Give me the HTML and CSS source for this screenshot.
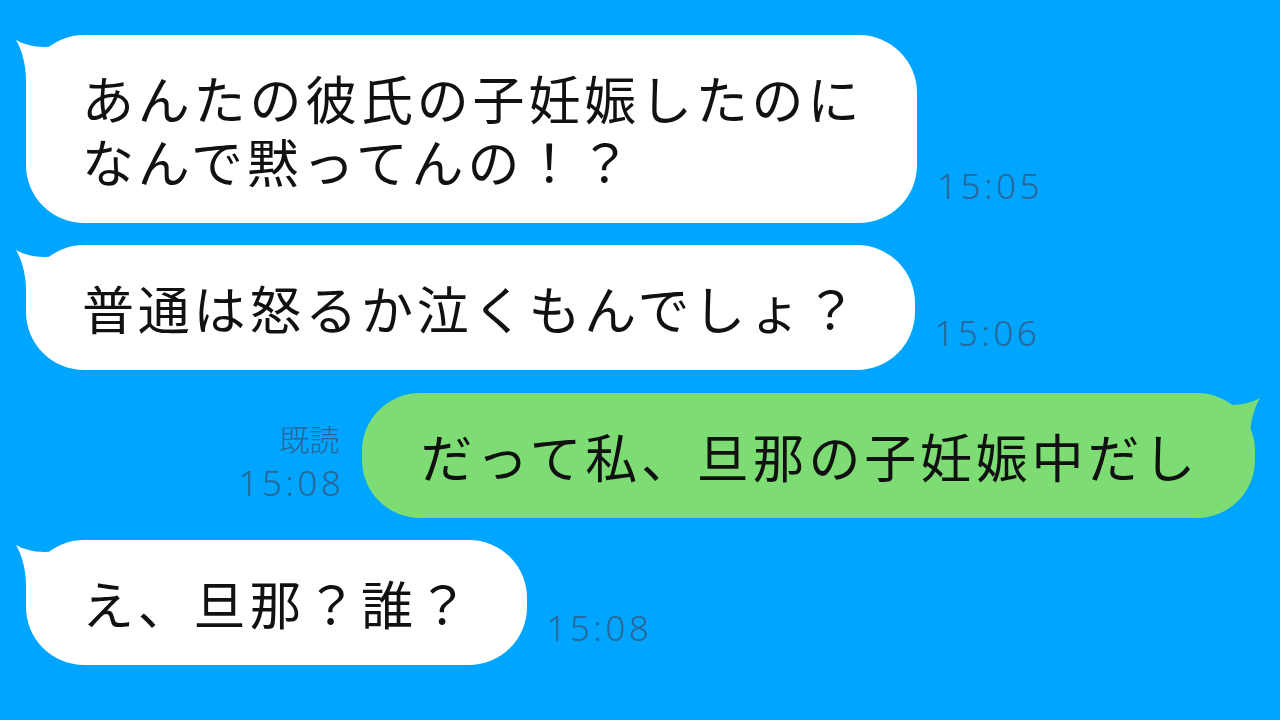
FILE: index.html
```html
<!DOCTYPE html>
<html lang="ja">

<head>
    <meta charset="UTF-8">
    <meta name="viewport" content="width=device-width, initial-scale=1.0">
    <title>トーク</title>
    <link rel="stylesheet" href="styles.css">
</head>

<body>
    <div class="chat">
        <div class="row">
            <div class="bubble">
                <svg class="tail" viewBox="0 0 72 60"><path d="M2 5 C14 12 40 18 72 1 L72 60 L12 60 L12 45 C12 30 8 15 2 5 Z"/></svg>
                <p>あんたの彼氏の子妊娠したのに<br>なんで黙ってんの！？</p>
            </div>
            <span class="time">15:05</span>
        </div>
        <div class="row">
            <div class="bubble">
                <svg class="tail" viewBox="0 0 72 60"><path d="M2 5 C14 12 40 18 72 1 L72 60 L12 60 L12 45 C12 30 8 15 2 5 Z"/></svg>
                <p>普通は怒るか泣くもんでしょ？</p>
            </div>
            <span class="time">15:06</span>
        </div>
        <div class="row mine">
            <div class="meta">
                <span class="read">既読</span>
                <span class="stamp">15:08</span>
            </div>
            <div class="bubble green">
                <svg class="tail" viewBox="0 0 72 60"><path d="M2 5 C14 12 40 18 72 1 L72 60 L12 60 L12 45 C12 30 8 15 2 5 Z"/></svg>
                <p>だって私、旦那の子妊娠中だし</p>
            </div>
        </div>
        <div class="row">
            <div class="bubble">
                <svg class="tail" viewBox="0 0 72 60"><path d="M2 5 C14 12 40 18 72 1 L72 60 L12 60 L12 45 C12 30 8 15 2 5 Z"/></svg>
                <p>え、旦那？誰？</p>
            </div>
            <span class="time">15:08</span>
        </div>
    </div>
</body>

</html>
```

FILE: styles.css
```css
* {
    padding: 0;
    margin: 0;
    box-sizing: border-box;
}

body {
    width: 1280px;
    height: 720px;
    overflow: hidden;
    background-color: #00a5ff;
    font-family: "Noto Sans CJK JP", "Noto Sans", sans-serif;
}

.chat {
    display: flex;
    flex-direction: column;
    gap: 22px;
    padding-top: 35px;
}

.row {
    display: flex;
    align-items: flex-end;
    padding-left: 26px;
}

.row.mine {
    justify-content: flex-end;
    padding-left: 0;
    padding-right: 25px;
    margin-top: 1px;
}

.bubble {
    position: relative;
    background-color: #fff;
    border-radius: 58px;
    padding: 31px 54px 31px 56px;
}

.bubble p {
    position: relative;
    font-size: 52px;
    line-height: 63px;
    letter-spacing: 3.8px;
    color: #111;
    white-space: nowrap;
}

.tail {
    position: absolute;
    left: -12px;
    top: 0;
    width: 72px;
    height: 60px;
    fill: #fff;
}

.green {
    background-color: #7ddc73;
    padding-left: 58px;
    padding-right: 56px;
}

.green .tail {
    left: auto;
    right: -7px;
    top: 0;
    fill: #7ddc73;
    transform: scaleX(-1);
}

.time,
.meta {
    font-family: "Noto Sans", "Noto Sans CJK JP", sans-serif;
    font-weight: 300;
    color: #2a6799;
}

.time {
    font-size: 35px;
    line-height: 34px;
    letter-spacing: 3.5px;
    margin-left: 20px;
    margin-bottom: 20px;
}

.meta {
    display: flex;
    flex-direction: column;
    align-items: flex-end;
    margin-right: 21px;
    margin-bottom: 12px;
}

.read {
    font-family: "Noto Sans CJK JP", sans-serif;
    font-size: 30px;
    line-height: 43px;
    margin-right: 2px;
}

.stamp {
    font-size: 35px;
    line-height: 46px;
    letter-spacing: 3.5px;
    margin-right: -3px;
}
```
